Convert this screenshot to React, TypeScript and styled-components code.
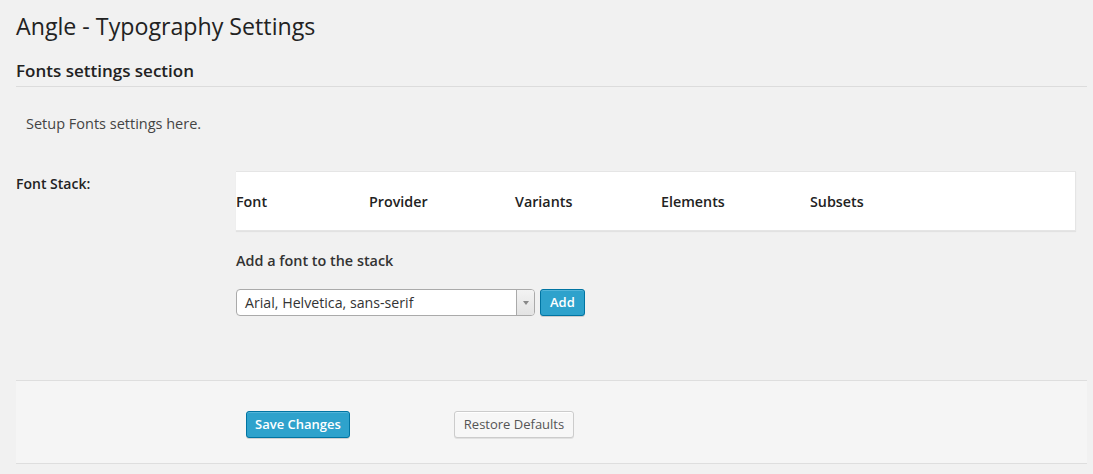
import React from "react";
import styled, { createGlobalStyle } from "styled-components";

const Global = createGlobalStyle`
  html, body { margin: 0; padding: 0; background: #f1f1f1; }
  body { font-family: "Open Sans", "Noto Sans", sans-serif; color: #444; font-size: 13px; }
  * { box-sizing: border-box; }
`;

const Page = styled.div`
  padding: 0 6px 0 16px;
  width: 1093px;
`;

const Title = styled.h1`
  margin: 0;
  padding: 12px 0 0;
  font-size: 23.2px;
  font-weight: 400;
  line-height: 29px;
  color: #222;
`;

const SectionTitle = styled.h3`
  margin: 20px 0 0;
  font-size: 17px;
  font-weight: 600;
  line-height: 20px;
  color: #222;
  padding-bottom: 5px;
  border-bottom: 1px solid #dcdcdc;
`;

const Intro = styled.p`
  margin: 27px 0 0 10px;
  font-size: 14.5px;
  line-height: 20px;
  color: #444;
`;

const FieldRow = styled.div`
  display: grid;
  grid-template-columns: 220px 840px;
  margin-top: 37px;
`;

const FieldLabel = styled.div`
  font-size: 14px;
  font-weight: 600;
  color: #222;
  line-height: 20px;
  padding-top: 3px;
`;

const FieldBody = styled.div`
  display: flex;
  flex-direction: column;
`;

const StackTable = styled.div`
  background: #fff;
  height: 60px;
  display: grid;
  grid-template-columns: 133px 146px 146px 149px 1fr;
  align-items: center;
  box-shadow: 0 1px 1px rgba(0, 0, 0, 0.06);
  border: 1px solid #e5e5e5;
  border-left: none;
`;

const HeadCell = styled.div`
  font-size: 14.3px;
  font-weight: 600;
  color: #222;
  line-height: 20px;
  padding-top: 2px;
`;

const AddLabel = styled.div`
  margin-top: 20px;
  font-size: 14.4px;
  font-weight: 600;
  color: #333;
  line-height: 20px;
`;

const AddRow = styled.div`
  display: flex;
  align-items: center;
  gap: 5px;
  margin-top: 18px;
`;

const Select = styled.div`
  width: 299px;
  height: 27px;
  background: #fff;
  border: 1px solid #aaa;
  border-radius: 4px;
  display: flex;
  align-items: stretch;
  overflow: hidden;
`;

const SelectText = styled.div`
  flex: 1;
  padding-left: 8px;
  font-size: 14.2px;
  line-height: 25px;
  color: #333;
`;

const SelectArrow = styled.div`
  width: 18px;
  border-left: 1px solid #aaa;
  background: linear-gradient(#f3f3f3, #e3e3e3);
  display: flex;
  align-items: center;
  justify-content: center;
  &::after {
    content: "";
    border-left: 3px solid transparent;
    border-right: 3px solid transparent;
    border-top: 4px solid #888;
  }
`;

const Button = styled.button<{ $primary?: boolean }>`
  font-family: "Open Sans", "Noto Sans", sans-serif;
  font-size: 13px;
  height: 27px;
  padding: 0 ${(p) => (p.$primary ? 8 : 9)}px;
  border-radius: 3px;
  cursor: pointer;
  line-height: 25px;
  border: 1px solid ${(p) => (p.$primary ? "#0074a2" : "#cccccc")};
  background: ${(p) => (p.$primary ? "#2ea2cc" : "#f7f7f7")};
  color: ${(p) => (p.$primary ? "#fff" : "#555")};
  font-weight: ${(p) => (p.$primary ? 600 : 400)};
  box-shadow: ${(p) =>
    p.$primary
      ? "inset 0 1px 0 rgba(120,200,230,0.5), 0 1px 0 rgba(0,0,0,0.15)"
      : "inset 0 1px 0 #fff, 0 1px 0 rgba(0,0,0,0.08)"};
`;

const AddButton = styled(Button)`
  padding: 0 9px;
`;

const Footer = styled.div`
  margin-top: 64px;
  background: #f5f5f5;
  border-top: 1px solid #dedede;
  border-bottom: 1px solid #dedede;
  height: 84px;
  display: flex;
  align-items: flex-start;
  padding: 30px 0 0 230px;
  gap: 104px;
`;

export default function App() {
  return (
    <>
      <Global />
      <Page>
        <Title>Angle - Typography Settings</Title>
        <SectionTitle>Fonts settings section</SectionTitle>
        <Intro>Setup Fonts settings here.</Intro>
        <FieldRow>
          <FieldLabel>Font Stack:</FieldLabel>
          <FieldBody>
            <StackTable>
              <HeadCell>Font</HeadCell>
              <HeadCell>Provider</HeadCell>
              <HeadCell>Variants</HeadCell>
              <HeadCell>Elements</HeadCell>
              <HeadCell>Subsets</HeadCell>
            </StackTable>
            <AddLabel>Add a font to the stack</AddLabel>
            <AddRow>
              <Select>
                <SelectText>Arial, Helvetica, sans-serif</SelectText>
                <SelectArrow />
              </Select>
              <AddButton $primary>Add</AddButton>
            </AddRow>
          </FieldBody>
        </FieldRow>
        <Footer>
          <Button $primary>Save Changes</Button>
          <Button>Restore Defaults</Button>
        </Footer>
      </Page>
    </>
  );
}
